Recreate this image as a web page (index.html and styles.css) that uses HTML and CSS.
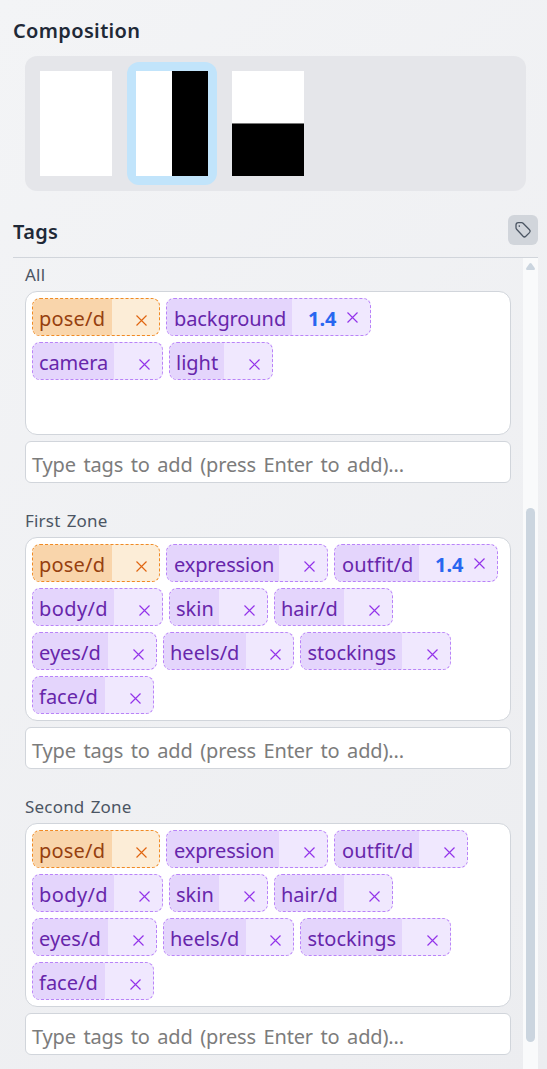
FILE: index.html
```html
<!DOCTYPE html>
<html lang="en">
<head>
<meta charset="utf-8">
<title>Composition</title>
<link rel="stylesheet" href="styles.css">
</head>
<body>
<svg class="defs" width="0" height="0"><symbol id="x" viewBox="0 0 11 11"><path d="M.5.5l10 10M10.5.5l-10 10"/></symbol></svg>
<main class="panel">
  <h2 class="title">Composition</h2>
  <div class="layouts">
    <button class="layout"><span class="thumb"></span></button>
    <button class="layout selected"><span class="thumb split-v"></span></button>
    <button class="layout"><span class="thumb split-h"></span></button>
  </div>
  <header class="tags-header">
    <h2 class="title">Tags</h2>
    <button class="icon-button" aria-label="Tags">
      <svg width="18" height="18" viewBox="0 0 18 18"><path d="M2 6.500V4q0-2.300 2.300-2.300h3.300q.9 0 1.500.6l6.400 6.400q1.400 1.400 0 2.900l-3.700 3.700q-1.400 1.300-2.700 0L2.600 8.300q-.6-.6-.6-1.800z"/><circle class="dot" cx="5.300" cy="5.100" r=".8"/></svg>
    </button>
  </header>
  <div class="scroller">
    <div class="zones">
      <section class="zone">
        <h3 class="zone-name">All</h3>
        <div class="tags">
          <div class="tag orange pose"><span class="label">pose/d</span><span class="rest"><svg class="x"><use href="#x"/></svg></span></div>
          <div class="tag background"><span class="label">background</span><span class="rest weighted"><b class="weight">1.4</b><svg class="x"><use href="#x"/></svg></span></div>
          <div class="tag camera"><span class="label">camera</span><span class="rest"><svg class="x"><use href="#x"/></svg></span></div>
          <div class="tag light"><span class="label">light</span><span class="rest"><svg class="x"><use href="#x"/></svg></span></div>
        </div>
        <div class="entry">Type tags to add (press Enter to add)...</div>
      </section>
      <section class="zone">
        <h3 class="zone-name">First Zone</h3>
        <div class="tags">
          <div class="tag orange pose"><span class="label">pose/d</span><span class="rest"><svg class="x"><use href="#x"/></svg></span></div>
          <div class="tag expression"><span class="label">expression</span><span class="rest"><svg class="x"><use href="#x"/></svg></span></div>
          <div class="tag outfit heavy"><span class="label">outfit/d</span><span class="rest weighted"><b class="weight">1.4</b><svg class="x"><use href="#x"/></svg></span></div>
          <div class="tag body"><span class="label">body/d</span><span class="rest"><svg class="x"><use href="#x"/></svg></span></div>
          <div class="tag skin"><span class="label">skin</span><span class="rest"><svg class="x"><use href="#x"/></svg></span></div>
          <div class="tag hair"><span class="label">hair/d</span><span class="rest"><svg class="x"><use href="#x"/></svg></span></div>
          <div class="tag eyes"><span class="label">eyes/d</span><span class="rest"><svg class="x"><use href="#x"/></svg></span></div>
          <div class="tag heels"><span class="label">heels/d</span><span class="rest"><svg class="x"><use href="#x"/></svg></span></div>
          <div class="tag stockings"><span class="label">stockings</span><span class="rest"><svg class="x"><use href="#x"/></svg></span></div>
          <div class="tag face"><span class="label">face/d</span><span class="rest"><svg class="x"><use href="#x"/></svg></span></div>
        </div>
        <div class="entry">Type tags to add (press Enter to add)...</div>
      </section>
      <section class="zone">
        <h3 class="zone-name">Second Zone</h3>
        <div class="tags">
          <div class="tag orange pose"><span class="label">pose/d</span><span class="rest"><svg class="x"><use href="#x"/></svg></span></div>
          <div class="tag expression"><span class="label">expression</span><span class="rest"><svg class="x"><use href="#x"/></svg></span></div>
          <div class="tag outfit"><span class="label">outfit/d</span><span class="rest"><svg class="x"><use href="#x"/></svg></span></div>
          <div class="tag body"><span class="label">body/d</span><span class="rest"><svg class="x"><use href="#x"/></svg></span></div>
          <div class="tag skin"><span class="label">skin</span><span class="rest"><svg class="x"><use href="#x"/></svg></span></div>
          <div class="tag hair"><span class="label">hair/d</span><span class="rest"><svg class="x"><use href="#x"/></svg></span></div>
          <div class="tag eyes"><span class="label">eyes/d</span><span class="rest"><svg class="x"><use href="#x"/></svg></span></div>
          <div class="tag heels"><span class="label">heels/d</span><span class="rest"><svg class="x"><use href="#x"/></svg></span></div>
          <div class="tag stockings"><span class="label">stockings</span><span class="rest"><svg class="x"><use href="#x"/></svg></span></div>
          <div class="tag face"><span class="label">face/d</span><span class="rest"><svg class="x"><use href="#x"/></svg></span></div>
        </div>
        <div class="entry">Type tags to add (press Enter to add)...</div>
      </section>
    </div>
    <div class="track"><svg class="arrow" width="9" height="7" viewBox="0 0 9 7"><path d="M3.500.6q1-1.200 2 0L8.700 5q.8 2-.9 2H1.200Q-.5 7 .3 5z"/></svg><div class="thumb-bar"></div></div>
  </div>
</main>
</body>
</html>
```
FILE: styles.css
```css
* { box-sizing: border-box; }
html, body { margin: 0; height: 1069px; overflow: hidden; }
body {
  font-family: "Noto Sans", "Open Sans", sans-serif;
  background: linear-gradient(135deg, #f3f4f6, #ecedf0);
}
button { border: 0; padding: 0; background: none; font: inherit; }
.defs { display: none; }
.panel { width: 538px; padding: 16px 0 0 13px; }
.title { margin: 0; font-size: 20px; line-height: 30px; font-weight: 600; letter-spacing: .35px; color: #1f2937; }

.layouts {
  display: flex; gap: 6px;
  width: 501px; height: 135px;
  margin: 10px 0 0 12px; padding: 6px;
  border-radius: 12px; background: #e5e6ea;
}
.layout { width: 90px; height: 123px; padding: 9px; border-radius: 12px; }
.layout.selected { background: #c1e4fb; }
.thumb { display: block; width: 72px; height: 105px; background: #fff; }
.split-v { background: linear-gradient(90deg, #fff 50%, #000 50%); }
.split-h { background: linear-gradient(#fff 52px, #777 52px 53px, #000 53px); }

.tags-header {
  display: flex; justify-content: space-between; align-items: center;
  height: 43px; margin-top: 24px; padding-bottom: 12px;
  border-bottom: 1px solid #d1d5db;
}
.tags-header .title { padding-top: 3px; }
.icon-button {
  display: flex; align-items: center; justify-content: center;
  width: 30px; height: 30px; border-radius: 6px; background: #d1d5db;
}
.icon-button path { fill: none; stroke: #4b5563; stroke-width: 1.3; }
.icon-button .dot { fill: #374151; }

.scroller { display: flex; justify-content: space-between; height: 811px; overflow: hidden; }
.zones { width: 498px; padding-left: 12px; }
.zone { margin-bottom: 26px; }
.zone-name {
  height: 28px; margin: 0;
  font-size: 17px; line-height: 24px; font-weight: 400; color: #4b5563;
  letter-spacing: .2px; word-spacing: 1.5px;
}
.zone:first-child .zone-name { height: 33px; padding-top: 5px; }
.tags {
  display: flex; flex-wrap: wrap; align-content: flex-start; gap: 6px;
  min-height: 144px; padding: 6px;
  border: 1px solid #d1d5db; border-radius: 12px; background: #fff;
}
.entry {
  height: 42px; margin-top: 6px; padding: 3px 6px 0;
  border: 1px solid #d1d5db; border-radius: 6px; background: #fff;
  font-size: 20px; line-height: 40px; color: #7c7c7c; white-space: nowrap;
  letter-spacing: -.15px; word-spacing: 2.500px;
}

.tag {
  display: flex; height: 38px; overflow: hidden;
  border: 1px dashed #b983f8; border-radius: 8px;
  background: #f0e8fe; color: #6726ab;
}
.label {
  flex: none; padding: 2px 0 0 6px;
  background: #e4d5fc; font-size: 20px; line-height: 36px; white-space: nowrap;
}
.rest { flex: 1; display: flex; justify-content: flex-end; padding: 15.500px 12.500px 0 0; }
.weighted { padding-top: 12.500px; }
.weight { margin: -10.500px 10px 0 0; font-size: 20px; line-height: 36px; font-weight: 700; color: #2866f0; }
.x { width: 11px; height: 11px; fill: none; stroke: #9333ea; stroke-width: 1.15; }
.orange { border-color: #f08a24; background: #fcedd7; color: #96400f; }
.orange .label { background: #f9d5ab; }
.orange .x { stroke: #e06510; }

.pose { width: 128px; }
.pose .label { width: 79px; letter-spacing: .2px; }
.background { width: 205px; }
.background .label { width: 125px; padding-left: 7px; letter-spacing: -.1px; }
.camera, .body { width: 131px; }
.camera .label, .body .label { width: 81px; }
.camera .label { letter-spacing: -.15px; }
.body .label { letter-spacing: .4px; }
.light { width: 104px; }
.light .label { width: 54px; }
.expression { width: 162px; }
.expression .label { width: 112px; padding-left: 7px; letter-spacing: -.15px; }
.outfit { width: 134px; }
.outfit.heavy { width: 164px; }
.outfit .label { width: 84px; padding-left: 7px; letter-spacing: .1px; }
.skin { width: 99px; }
.skin .label { width: 49px; }
.hair { width: 119px; }
.hair .label { width: 69px; }
.eyes { width: 125px; }
.eyes .label { width: 75px; }
.heels { width: 131px; }
.heels .label { width: 82px; }
.stockings { width: 151px; }
.stockings .label { width: 101px; padding-left: 6.500px; }
.face { width: 122px; }
.face .label { width: 72px; }

.track { width: 15px; padding: 5px 3px 0; background: #f9fafb; }
.arrow { display: block; fill: #cbd5df; }
.thumb-bar { height: 534px; margin-top: 238px; border-radius: 5px; background: #cbd5df; }
```
